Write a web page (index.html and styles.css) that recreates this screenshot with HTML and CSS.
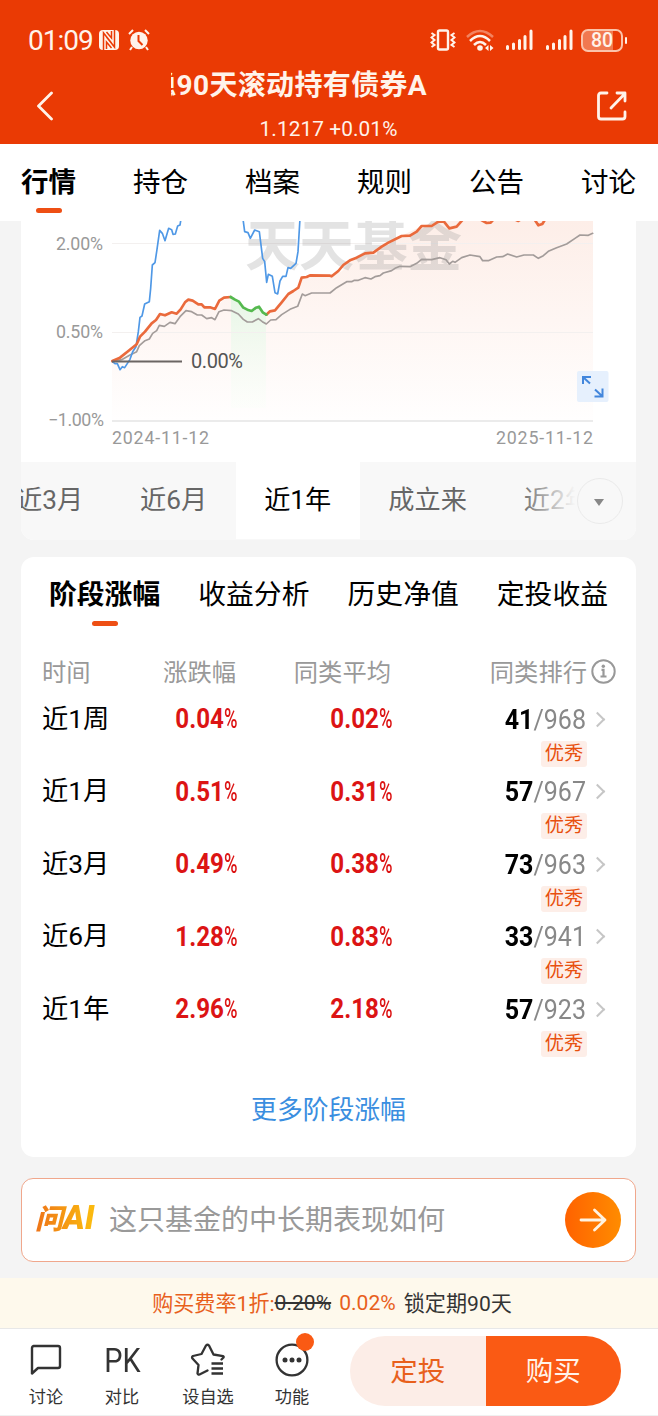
FILE: index.html
```html
<!DOCTYPE html>
<html lang="zh-CN">
<head>
  <meta charset="UTF-8">
  <meta name="viewport" content="width=device-width, initial-scale=1.0">
  <title>基金详情</title>
  <link rel="stylesheet" href="styles.css">
</head>
<body>
  <header class="header">
    <div class="status">
      <span class="clock">01:09</span>
      <svg class="ic-nfc" width="20" height="20" viewBox="0 0 20 20"><rect width="20" height="20" rx="4" fill="#fff3ea"/><path d="M4.500 20V3L12.500 13M15.500 0V17L7.500 7M7.500 19V12L12.500 18M12.500 1V8L7.500 2" fill="none" stroke="#ea3a04" stroke-width="1.500"/></svg>
      <svg class="ic-alarm" width="22" height="22" viewBox="0 0 22 22"><circle cx="11" cy="11.500" r="8.700" fill="#fff3ea"/><path d="M1 5l4-4M21 5l-4-4M4 18l-2 3M18 18l2 3" stroke="#fff3ea" stroke-width="2"/><path d="M10.500 6v6l4 4" fill="none" stroke="#ea3a04" stroke-width="2"/></svg>
      <div class="status-right">
        <svg width="26" height="22" viewBox="0 0 26 22" fill="none" stroke="#fff3ea"><rect x="8" y="1.500" width="10" height="19" rx="1.500" stroke-width="2.400"/><path d="M1.500 4l3 2-3 2.500 3 2.500-3 2.500 3 2.500-3 2M24.500 4l-3 2 3 2.500-3 2.500 3 2.500-3 2.500 3 2" stroke-width="2"/></svg>
        <svg width="28" height="22" viewBox="0 0 28 22" fill="none" stroke="#fff3ea" stroke-width="2.500"><path d="M1 8Q14-4 27 8" opacity=".4"/><path d="M4 12Q14 2 24 12M8 16Q14 10 20 16"/><circle cx="14" cy="19" r="2.800" fill="#fff3ea" stroke="none"/><path d="M22.500 16v6l-3.500-3zM24 16v6l3.500-3z" fill="#fff3ea" stroke="none"/></svg>
        <svg width="28" height="22" viewBox="0 0 28 22" stroke="#fff3ea" stroke-width="3" stroke-linecap="round"><path d="M2.500 17.500v2M8.500 15v4.500M14.500 11.500v8M20 7.500v12M26 2v17.500"/></svg>
        <svg width="28" height="22" viewBox="0 0 28 22" stroke="#fff3ea" stroke-width="3" stroke-linecap="round"><path d="M2.500 17.500v2M8.500 15v4.500M14.500 11.500v8M20 7.500v12M26 2v17.500"/></svg>
        <span class="battery">80</span>
      </div>
    </div>
    <svg class="back" width="18" height="30" viewBox="0 0 18 30"><path d="M16.500 2L3.500 15l13 13" fill="none" stroke="#fff3ea" stroke-width="2.800" stroke-linecap="round" stroke-linejoin="round"/></svg>
    <div class="title-box">
      <h1 class="marquee"><span>稳90天滚动持有债券A</span></h1>
      <p class="nav-value">1.1217 +0.01%</p>
    </div>
    <svg class="share" width="30" height="30" viewBox="0 0 30 30" fill="none" stroke="#fff3ea" stroke-width="2.800" stroke-linecap="round" stroke-linejoin="round"><path d="M10 2H4Q1.500 2 1.500 4.500V25.500Q1.500 28 4 28H25.500Q28 28 28 25.500V21"/><path d="M14 17L28 2.500M20 2h8v8"/></svg>
  </header>

  <nav class="tabs">
    <a class="active">行情</a><a>持仓</a><a>档案</a><a>规则</a><a>公告</a><a>讨论</a>
  </nav>

  <main>
    <section class="card chart-card">
      <svg class="chart" width="615" height="241" viewBox="21 221 615 241">
        <defs>
          <linearGradient id="fillOrange" x1="0" y1="221" x2="0" y2="420" gradientUnits="userSpaceOnUse">
            <stop offset="0" stop-color="#fdeee8"/><stop offset="1" stop-color="#fffefe"/>
          </linearGradient>
          <linearGradient id="fillGreen" x1="0" y1="0" x2="0" y2="1">
            <stop offset="0" stop-color="#e6f6e6"/><stop offset="1" stop-color="#f8fff8" stop-opacity=".3"/>
          </linearGradient>
        </defs>
        <path d="M112 361L128 351 137 343 145 331 160 314 175 313 185 302 192 300 215 309 224 299 231 297 240 302 250 311 260 307 266 315 275 311 288 295 299 287 302 277 331 276 342 271 355 257 375 250 401 236 422 226 438 221H593V420H112Z" fill="url(#fillOrange)"/>
        <path d="M231 297L240 302 250 311 260 307 266 315V408H231Z" fill="url(#fillGreen)"/>
        <path class="grid" d="M112 243.500H593M112 332.500H593"/>
        <path class="axis" d="M112 421H593"/>
        <text class="watermark" x="245" y="265" textLength="217">天天基金</text>
        <g transform="translate(20 215) scale(.33333)">
          <path class="line average" d="M277 440L305 434 330 420 350 410 358 392 375 377 388 372 398 355 410 347 418 331 433 334 450 322 465 326 480 305 498 287 515 290 532 300 545 300 560 311 575 308 585 314 597 290 612 285 635 287 655 297 670 313 682 321 697 321 715 311 727 320 739 327 752 315 768 314 785 299 810 283 833 274 847 237 855 242 875 234 930 234 950 218 970 206 980 200 995 200 1003 196 1015 196 1035 188 1053 192 1065 185 1080 182 1090 174 1115 167 1125 160 1140 154 1170 155 1190 145 1205 133 1235 134 1260 128 1278 134 1288 147 1298 139 1305 142 1325 128 1350 120 1380 125 1388 137 1405 137 1430 126 1448 125 1463 117 1490 126 1512 120 1540 120 1555 130 1570 122 1585 109 1610 98 1640 87 1665 70 1680 60 1705 61 1718 55"/>
          <path class="line index" d="M277 440L285 446 292 446 300 464 307 455 314 458 330 433 338 410 348 395 355 350 360 307 366 303 374 267 388 260 392 220 397 150 405 143 410 110 419 46 427 55 435 77 446 40 455 44 459 58 466 57 473 33 480 30 483 12M669 12L674 50 684 53 691 70 704 45 718 50 728 130 734 140 740 202 745 178 757 184 765 233 773 237 780 198 788 184 798 184 804 158 812 160 828 145 834 110 840 10"/>
          <path class="line fund" d="M277 438L300 428 325 408 350 388 360 365 375 350 395 325 408 315 420 297 435 301 455 292 470 296 482 283 495 262 505 254 518 257 535 268 545 268 553 277 570 277 585 282 598 257 612 248 632 246M739 299L750 289 765 286 785 262 805 237 820 228 835 218 845 188 860 186 870 181 930 182 935 184 955 168 970 150 990 136 1010 128 1035 115 1060 113 1085 95 1105 83 1145 63 1170 62 1190 50 1205 33 1235 33 1255 20 1272 20 1288 40 1310 35 1330 12M1382 14L1400 24 1412 23 1420 14M1486 14L1495 18 1504 12M1544 14L1555 31 1567 27 1575 14"/>
          <path class="line drawdown" d="M632 246L645 254 657 260 670 278 682 284 695 288 708 278 717 275 728 292 739 299"/>
        </g>
        <path class="zero" d="M112 361.500H182"/>
        <g class="labels">
          <text x="56" y="249.500" textLength="47">2.00%</text>
          <text x="56" y="338" textLength="47">0.50%</text>
          <text x="48" y="426" textLength="56">−1.00%</text>
          <text x="112" y="444" textLength="97">2024-11-12</text>
          <text x="496" y="444" textLength="97">2025-11-12</text>
        </g>
        <text class="zero-label" x="191" y="368" textLength="52">0.00%</text>
        <rect x="577" y="371" width="31.500" height="31" rx="2" fill="#e6f0fd"/>
        <path d="M583 384V377H591M583.500 377.500L590 383.500M595 389.500L602 396M602.500 388.500V396.500H594.500" fill="none" stroke="#4286dc" stroke-width="2"/>
      </svg>
      <div class="periods">
        <div class="period-list">
          <span>近3月</span><span>近6月</span><span class="active">近1年</span><span>成立来</span><span>近2年</span>
        </div>
        <div class="period-more"><i></i></div>
      </div>
    </section>

    <section class="card stage-card">
      <div class="sub-tabs">
        <a class="active">阶段涨幅</a><a>收益分析</a><a>历史净值</a><a>定投收益</a>
      </div>
      <div class="row row-head">
        <span>时间</span><span>涨跌幅</span><span>同类平均</span><span>同类排行</span>
        <svg width="25" height="25" viewBox="0 0 25 25"><circle cx="12.500" cy="12.500" r="11.200" fill="none" stroke="#999" stroke-width="2"/><path d="M10.500 10.800h2V17.500M9.500 17.500h6" fill="none" stroke="#999" stroke-width="2.200"/><circle cx="12.300" cy="7.300" r="1.700" fill="#999"/></svg>
      </div>
      <div class="row">
        <span class="period">近1周</span><span class="num">0.04<i>%</i></span><span class="num">0.02<i>%</i></span>
        <span class="rank"><b>41</b>/968</span><span class="chevron"></span><span class="badge">优秀</span>
      </div>
      <div class="row">
        <span class="period">近1月</span><span class="num">0.51<i>%</i></span><span class="num">0.31<i>%</i></span>
        <span class="rank"><b>57</b>/967</span><span class="chevron"></span><span class="badge">优秀</span>
      </div>
      <div class="row">
        <span class="period">近3月</span><span class="num">0.49<i>%</i></span><span class="num">0.38<i>%</i></span>
        <span class="rank"><b>73</b>/963</span><span class="chevron"></span><span class="badge">优秀</span>
      </div>
      <div class="row">
        <span class="period">近6月</span><span class="num">1.28<i>%</i></span><span class="num">0.83<i>%</i></span>
        <span class="rank"><b>33</b>/941</span><span class="chevron"></span><span class="badge">优秀</span>
      </div>
      <div class="row">
        <span class="period">近1年</span><span class="num">2.96<i>%</i></span><span class="num">2.18<i>%</i></span>
        <span class="rank"><b>57</b>/923</span><span class="chevron"></span><span class="badge">优秀</span>
      </div>
      <a class="more">更多阶段涨幅</a>
    </section>

    <section class="ask">
      <span class="ask-logo">问<b>AI</b></span>
      <span class="ask-text">这只基金的中长期表现如何</span>
      <span class="ask-go"><svg width="28" height="24" viewBox="0 0 28 24"><path d="M2 12h24M15.500 2L26 12 15.500 22" fill="none" stroke="#fff3e0" stroke-width="2.800" stroke-linecap="round" stroke-linejoin="round"/></svg></span>
    </section>
  </main>

  <div class="fee"><span class="hot">购买费率1折:</span><del>0.20%</del><span class="hot rate">0.02%</span><span>锁定期90天</span></div>

  <footer class="toolbar">
    <a class="tool t1">
      <svg width="34" height="34" viewBox="0 0 34 34"><path d="M4.500 3H29Q31 3 31 5V23Q31 25 29 25H9L3 30.500V5Q3 3 5 3Z" fill="none" stroke="#333" stroke-width="2.400" stroke-linejoin="round"/></svg>
      <span>讨论</span>
    </a>
    <a class="tool t2"><strong class="pk">PK</strong><span>对比</span></a>
    <a class="tool t3">
      <svg width="36" height="34" viewBox="0 0 36 34" fill="none" stroke="#333" stroke-width="2.300" stroke-linejoin="round" stroke-linecap="round"><path d="M31.500 16.500l2-2Q34 13.500 33 13.200L23.500 11.500 19 2.500Q17.500 1 16 2.500L11.500 11 3 13Q1.500 14 2.500 15.500L8.500 22 7.500 30.500Q8 32 9.500 31.500L17.500 27.500"/><path d="M21.500 20.500H33M21.500 25.500H33M21.500 30.500H33" stroke-linecap="butt"/></svg>
      <span>设自选</span>
    </a>
    <a class="tool t4">
      <svg width="34" height="34" viewBox="0 0 34 34"><circle cx="17" cy="17" r="15.400" fill="none" stroke="#333" stroke-width="2.300"/><g fill="#333"><circle cx="10" cy="17" r="2.500"/><circle cx="17" cy="17" r="2.500"/><circle cx="24" cy="17" r="2.500"/></g></svg>
      <i class="dot"></i>
      <span>功能</span>
    </a>
    <div class="buy-group"><a class="plan">定投</a><a class="buy">购买</a></div>
  </footer>
</body>
</html>
```
FILE: styles.css
```css
* {
  box-sizing: border-box;
}

body {
  margin: 0;
  width: 658px;
  height: 1416px;
  overflow: hidden;
  background: #f4f4f4;
  color: #000;
  font-family: Roboto, "Noto Sans CJK SC", sans-serif;
}

h1, p {
  margin: 0;
}

i {
  font-style: normal;
}

svg {
  display: block;
  flex: none;
}

/* header */
.header {
  height: 144px;
  background: #ea3a04;
  color: #fff3ea;
  display: grid;
  grid-template: 66px 78px / 171px 257px 1fr;
}

.status {
  grid-column: 1 / -1;
  display: flex;
  align-items: center;
  padding: 14px 31px 0 28px;
}

.clock {
  width: 71px;
  font-size: 28px;
  letter-spacing: -1px;
}

.ic-alarm {
  margin-left: 9px;
}

.status-right {
  margin-left: auto;
  display: flex;
  align-items: center;
  gap: 11.500px;
}

.status-right svg:nth-child(1) {
  margin-right: 1px;
}

.status-right svg:nth-child(2) {
  margin-left: -3px;
}

.battery {
  position: relative;
  width: 42px;
  height: 23px;
  margin-left: -3px;
  margin-right: 4px;
  border: 2px solid #fbc3aa;
  border-radius: 7px;
  background: linear-gradient(90deg, #f17950 80%, transparent 80%);
  font-size: 19.500px;
  font-weight: 500;
  line-height: 20px;
  text-align: center;
}

.battery::after {
  content: "";
  position: absolute;
  right: -6px;
  top: 6px;
  width: 2px;
  height: 7px;
  border-radius: 1px;
  background: #fff3ea;
}

.back {
  margin: 25px 0 0 35px;
}

.share {
  margin: 25px 0 0 169px;
}

.marquee {
  display: flex;
  justify-content: flex-end;
  overflow: hidden;
  height: 40px;
  font-size: 28px;
  font-weight: 700;
  line-height: 39px;
  letter-spacing: .35px;
  white-space: nowrap;
}

.marquee span {
  margin-right: 1px;
}

.nav-value {
  width: 315px;
  margin-top: 9px;
  text-align: center;
  font-size: 20.800px;
  line-height: 28px;
  letter-spacing: .1px;
}

/* main tabs */
.tabs {
  height: 77px;
  padding: 20px 22px 0 21px;
  background: #fff;
  display: flex;
  justify-content: space-between;
  font-size: 27.500px;
  line-height: 38px;
}

.tabs .active,
.sub-tabs .active {
  position: relative;
  font-weight: 700;
}

.tabs .active::after,
.sub-tabs .active::after {
  content: "";
  position: absolute;
  left: 50%;
  bottom: 8px;
  width: 26px;
  height: 5px;
  margin-left: -13px;
  border-radius: 3px;
  background: #ee4f14;
}

main {
  padding: 0 22px 0 21px;
  height: 1057px;
}

.card {
  background: #fff;
  border-radius: 13px;
  overflow: hidden;
}

/* chart */
.chart-card {
  height: 319px;
  border-top-left-radius: 0;
  border-top-right-radius: 0;
}

.line {
  fill: none;
  stroke-linejoin: round;
  stroke-linecap: round;
}

.average { stroke: #a39c9a; stroke-width: 5; }
.index { stroke: #4f98e6; stroke-width: 5; }
.fund { stroke: #ea6a3c; stroke-width: 8; }
.drawdown { stroke: #55b94f; stroke-width: 8; }

.grid { stroke: #f3f0ef; }
.axis { stroke: #ebebeb; stroke-width: 2; }
.zero { stroke: #6b6563; stroke-width: 2; }

.labels {
  fill: #999;
  font-size: 17.800px;
}

.zero-label {
  fill: #555;
  font-size: 20px;
}

.watermark {
  fill: #8a8a8a;
  fill-opacity: .24;
  font-size: 55px;
  font-weight: 700;
}

.periods {
  position: relative;
  height: 78px;
  background: #f8f8f8;
  overflow: hidden;
}

.period-list {
  display: flex;
  width: 720px;
  margin-left: -33px;
  font-size: 26.200px;
  line-height: 77px;
  color: #666;
}

.period-list span {
  padding: 0 29px 0 28px;
}

.period-list .active {
  background: #fff;
  color: #000;
}

.period-more {
  position: absolute;
  top: 0;
  right: 0;
  width: 112px;
  height: 78px;
  background: linear-gradient(90deg, rgba(248, 248, 248, .1), #f8f8f8 46%);
}

.period-more i {
  position: absolute;
  left: 53px;
  top: 16px;
  width: 46px;
  height: 46px;
  border: 1.500px solid #eaeaea;
  border-radius: 50%;
}

.period-more i::after {
  content: "";
  position: absolute;
  left: 16px;
  top: 20px;
  border: 5.500px solid transparent;
  border-top: 7px solid #888;
  border-bottom: 0;
}

/* stage returns */
.stage-card {
  margin-top: 17px;
  height: 600px;
  padding: 19px 0 0 21px;
}

.sub-tabs {
  height: 73px;
  padding: 0 28px 0 7px;
  display: flex;
  justify-content: space-between;
  font-size: 27.800px;
  line-height: 38px;
}

.sub-tabs a {
  height: 54px;
}

.sub-tabs .active::after {
  bottom: 4px;
}

.row {
  height: 72.500px;
  display: grid;
  grid-template-columns: 75px 120px 155px 194px 1fr;
  grid-template-rows: 36px 26px;
  align-items: center;
  text-align: right;
}

.row-head {
  height: 52px;
  grid-template-rows: 44px;
  font-size: 24.300px;
  color: #999;
}

.row-head span {
  margin: -1px 1px 0 -1px;
}

.row-head span:first-child,
.row .period {
  text-align: left;
  margin-left: 0;
}

.row-head span:nth-child(4) {
  margin: -1px -1px 0 0;
}

.row-head svg {
  margin-left: 5px;
}

.period {
  margin-top: -6px;
  font-size: 26.300px;
  white-space: nowrap;
}

.num {
  color: #dc1414;
  font-size: 27.300px;
  font-weight: 700;
  transform: translateX(2px) scaleX(.885);
  transform-origin: right;
}

.num i {
  display: inline-block;
  width: 17px;
  font-weight: 500;
  transform: scaleX(.76);
  transform-origin: left;
}

.rank {
  color: #888;
  font-size: 27.500px;
  transform: scaleX(.91);
  transform-origin: right;
}

.rank b {
  color: #000;
}

.chevron {
  width: 11px;
  height: 11px;
  margin-left: 6px;
  border-top: 2px solid #c6c6c6;
  border-right: 2px solid #c6c6c6;
  transform: rotate(45deg);
}

.badge {
  grid-column: 4;
  justify-self: end;
  margin: 7px -1px 0 0;
  width: 46px;
  height: 26px;
  border-radius: 3px;
  background: #fdeee8;
  color: #e8500f;
  font-size: 19.300px;
  line-height: 25px;
  text-align: center;
}

.more {
  display: block;
  margin-top: 27px;
  padding-right: 21px;
  text-align: center;
  color: #3a8ee0;
  font-size: 25.800px;
  line-height: 38px;
}

/* ask AI */
.ask {
  margin-top: 22px;
  height: 84px;
  padding: 0 14px 0 13px;
  display: flex;
  align-items: center;
  background: #fff;
  border: 1px solid #f0a78c;
  border-radius: 12px;
}

.stage-card + .ask {
  margin-top: 21px;
}

.ask-logo {
  width: 74px;
  margin-top: -3px;
  font-size: 28px;
  font-weight: 900;
  font-style: italic;
  line-height: 40px;
  white-space: nowrap;
  background: linear-gradient(90deg, #ee7318, #fbb90f 75%);
  -webkit-background-clip: text;
  background-clip: text;
  color: transparent;
}

.ask-logo b {
  font-size: 33px;
}

.ask-text {
  margin-top: -4px;
  color: #999;
  font-size: 28px;
}

.ask-go {
  width: 56px;
  height: 56px;
  margin-left: auto;
  margin-top: -1px;
  border-radius: 50%;
  background: linear-gradient(90deg, #ff6200, #ff8c00);
  display: flex;
  align-items: center;
  justify-content: center;
}

/* fee strip */
.fee {
  height: 50px;
  padding: 0 0 2px 6px;
  display: flex;
  justify-content: center;
  align-items: center;
  background: #fef9ec;
  color: #333;
  font-size: 21.100px;
}

.hot {
  color: #e8601c;
}

.rate {
  margin: 0 8px;
}

/* bottom toolbar */
.toolbar {
  height: 88px;
  padding-right: 37px;
  display: flex;
  background: #fff;
  border-top: 1px solid #e8e8e8;
  border-bottom: 1px solid #f0f0f0;
  color: #333;
}

.tool {
  position: relative;
  display: flex;
  flex-direction: column;
  align-items: center;
  padding-top: 14px;
  font-size: 17.200px;
  line-height: 26px;
}

.tool svg,
.tool strong {
  height: 34px;
  margin-bottom: 7px;
}

.t1 { width: 92px; }
.t2 { width: 60px; }
.t3 { width: 112px; }
.t4 { width: 56px; }

.pk {
  font-size: 34px;
  font-weight: 400;
  line-height: 35px;
  transform: scaleX(.85);
}

.dot {
  position: absolute;
  right: 6px;
  top: 4px;
  width: 18px;
  height: 18px;
  border-radius: 50%;
  background: #fa5a14;
}

.buy-group {
  width: 271px;
  height: 70px;
  margin: 7px 0 0 auto;
  display: flex;
  border-radius: 35px;
  overflow: hidden;
  font-size: 27.500px;
  line-height: 71px;
  text-align: center;
}

.buy-group a {
  flex: 1;
}

.plan {
  background: #fcede7;
  color: #e8601c;
}

.buy {
  background: #fa5a14;
  color: #fff3ea;
}
```
